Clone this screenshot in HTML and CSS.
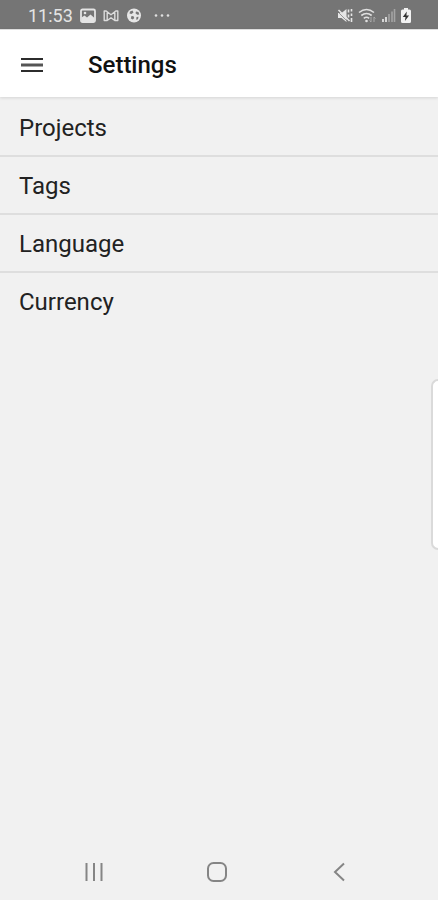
FILE: index.html
```html
<!DOCTYPE html>
<html lang="en">
<head>
    <meta charset="UTF-8">
    <meta name="viewport" content="width=device-width, initial-scale=1.0">
    <title>Settings</title>
    <link rel="stylesheet" href="styles.css">
</head>
<body>
    <div class="status-bar">
        <div class="status-left">
            <span class="time">11:53</span>
            <svg width="16" height="16" viewBox="0 0 16 16">
                <rect x="1" y="1.500" width="14" height="12.500" rx="1.500" fill="none" stroke="#e4e4e4" stroke-width="1.800"/>
                <path d="M1.500 9.500l3-2 2.500 2 3.500-3 4 3.500v4h-13z" fill="#e4e4e4"/>
                <circle cx="5" cy="5" r="1.300" fill="#e4e4e4"/>
            </svg>
            <svg width="16" height="16" viewBox="0 0 16 16">
                <path d="M1.200 12.500v-9.500h2l4.800 3.800 4.800-3.800h2v9.500h-3l-3.800-2.800-3.800 2.800zM4.200 12.500v-8M11.800 12.500v-8" fill="none" stroke="#dcdcdc" stroke-width="1.400" stroke-linejoin="round"/>
            </svg>
            <svg width="16" height="16" viewBox="0 0 16 16">
                <circle cx="8" cy="7.500" r="7" fill="#e6e6e6"/>
                <path d="M4 3.500l2.500-1 1 2-2 1.600-2-.6zM10 3.500l2.500.5.8 2.500-2 .3-1.800-1.500zM5.500 8l2 .3.8 1.700-1.500 1.500-2-1zM10.500 9l2-.3-.5 2.500-1.800.6z" fill="#777"/>
            </svg>
            <svg class="more" width="18" height="16" viewBox="0 0 18 16">
                <g fill="#e0e0e0"><circle cx="3" cy="7.500" r="1.300"/><circle cx="9" cy="7.500" r="1.300"/><circle cx="15" cy="7.500" r="1.300"/></g>
            </svg>
        </div>
        <div class="status-right">
            <svg width="18" height="16" viewBox="0 0 18 16">
                <path d="M2 5h3.500l5-4v13l-5-4h-3.500z" fill="#e6e6e6"/>
                <path d="M1.500 3.500l10 10" stroke="#757575" stroke-width=".7"/>
                <path d="M2.500 2l11 11" stroke="#e6e6e6" stroke-width="1.600"/>
                <path d="M12.500 1.500v3M12.500 6.500v3M15.500 1v2.500M15.500 5.500v2.500M15.500 10v4" stroke="#e6e6e6" stroke-width="1.600"/>
            </svg>
            <svg width="18" height="16" viewBox="0 0 18 16">
                <g fill="none" stroke="#e0e0e0" stroke-width="1.600">
                    <path d="M1 4.500q7.500-6 15 0M3.300 7.500q5.200-4 10.400 0M5.800 10.300q2.700-2 5.400 0"/>
                </g>
                <circle cx="8.500" cy="13" r="1.300" fill="#e0e0e0"/>
                <path d="M13 9v5l-1.500-1.500M16 14v-5l1.500 1.500" fill="none" stroke="#aaa"/>
            </svg>
            <svg width="16" height="16" viewBox="0 0 16 16">
                <path d="M3 11v3M6 9v5" stroke="#e0e0e0" stroke-width="1.800"/>
                <path d="M9 6v8M12 3.500v10.500M14.500 1v13" stroke="#a4a4a4" stroke-width="1.600"/>
            </svg>
            <svg width="12" height="16" viewBox="0 0 12 16">
                <path d="M4 0h4v1.500h1.500q1.500 0 1.500 1.500v10.500q0 1.500-1.500 1.500h-7q-1.500 0-1.500-1.500v-10.500q0-1.500 1.500-1.500h1.500z" fill="#f2f2f2"/>
                <path d="M6.800 3.500l-4 5.500h2.700l-.6 4 4.200-5.500h-2.700z" fill="#333"/>
            </svg>
        </div>
    </div>

    <header class="app-bar">
        <button class="menu-button" type="button" aria-label="Menu">
            <svg width="22" height="16" viewBox="0 0 22 16">
                <path d="M0 2h22M0 14h22" stroke="#2c2c2c" stroke-width="2"/>
                <path d="M0 8h22" stroke="#555" stroke-width="3"/>
            </svg>
        </button>
        <h1 class="title">Settings</h1>
    </header>

    <main class="content">
        <ul class="settings-list">
            <li><a href="#projects">Projects</a></li>
            <li><a href="#tags">Tags</a></li>
            <li><a href="#language">Language</a></li>
            <li><a href="#currency">Currency</a></li>
        </ul>
    </main>

    <div class="edge-handle"></div>

    <nav class="nav-bar">
        <button type="button" aria-label="Recent apps">
            <svg width="22" height="22" viewBox="0 0 22 22">
                <path d="M3.500 2v18M11 2v18M18.500 2v18" stroke="#858585" stroke-width="2"/>
            </svg>
        </button>
        <button type="button" aria-label="Home">
            <svg width="22" height="22" viewBox="0 0 22 22">
                <rect x="2" y="2" width="18" height="18" rx="5.500" fill="none" stroke="#858585" stroke-width="2"/>
            </svg>
        </button>
        <button type="button" aria-label="Back">
            <svg width="22" height="22" viewBox="0 0 22 22">
                <path d="M15 2.500l-9 8.500 9 8.500" fill="none" stroke="#858585" stroke-width="2"/>
            </svg>
        </button>
    </nav>
</body>
</html>
```
FILE: styles.css
```css
* {
    box-sizing: border-box;
}
body {
    margin: 0;
    min-height: 100vh;
    display: flex;
    flex-direction: column;
    font-family: Roboto, sans-serif;
    background-color: #f1f1f1;
    color: #222;
}
svg {
    display: block;
}
button {
    padding: 0;
    border: none;
    background: none;
    cursor: pointer;
}

/* Status bar */
.status-bar {
    height: 29px;
    padding: 2px 26px 0 28px;
    display: flex;
    justify-content: space-between;
    align-items: center;
    background-color: #757575;
}
.status-left,
.status-right {
    display: flex;
    align-items: center;
}
.status-left {
    gap: 7px;
}
.status-right {
    gap: 4px;
}
.time {
    font-size: 18px;
    line-height: 20px;
    color: #e4e4e4;
}
.more {
    margin-left: 4px;
}

/* App bar */
.app-bar {
    height: 68px;
    padding: 2px 21px 0;
    display: flex;
    align-items: center;
    gap: 45px;
    border-top: 1px solid #dedede;
    background-color: #fff;
    box-shadow: 0 1px 3px rgba(0, 0, 0, 0.12);
}
.title {
    margin: 0;
    font-size: 24px;
    line-height: 32px;
    font-weight: 500;
    color: #111;
}

/* Settings list */
.content {
    flex: 1;
    padding-top: 2px;
}
.settings-list {
    list-style-type: none;
    margin: 0;
    padding: 0;
}
.settings-list li + li {
    border-top: 2px solid #dedede;
}
.settings-list a {
    display: block;
    padding: 13px 19px 11px;
    font-size: 24px;
    line-height: 32px;
    color: #222;
    text-decoration: none;
}

/* Edge panel handle lies over the right side of the screen */
.edge-handle {
    position: fixed;
    top: 379px;
    right: 0;
    width: 7px;
    height: 171px;
    border: 2px solid #dadada;
    border-right: none;
    border-radius: 8px 0 0 8px;
    background-color: #fff;
}

/* Navigation bar */
.nav-bar {
    height: 56px;
    padding: 0 37px 0 33px;
    display: grid;
    grid-template-columns: repeat(3, 1fr);
    align-items: center;
    justify-items: center;
}
```
